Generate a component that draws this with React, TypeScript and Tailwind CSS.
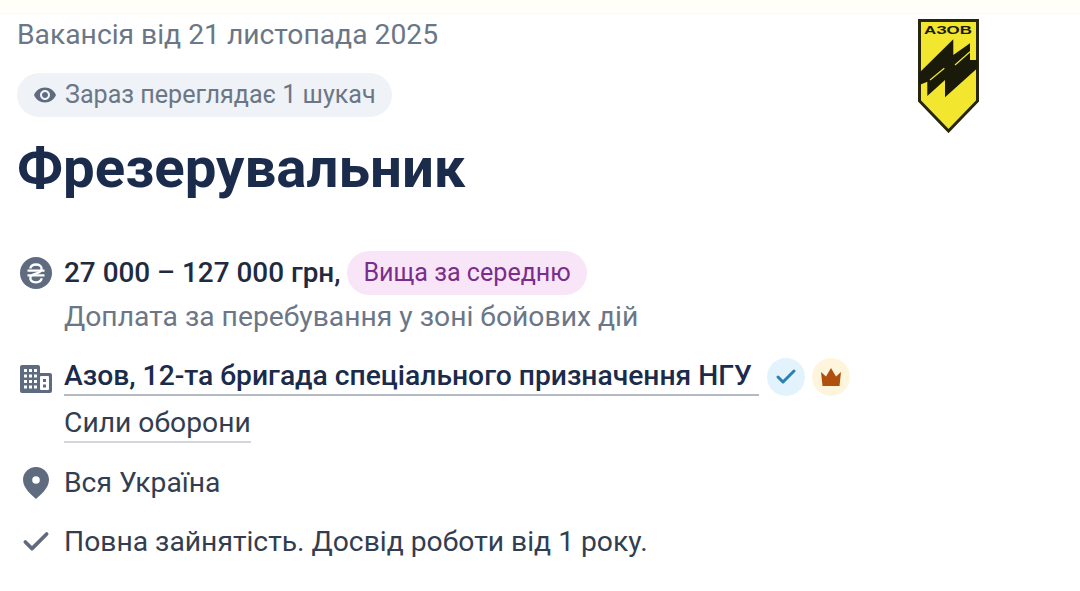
import { Check } from 'lucide-react';

function EyeIcon() {
  return (
    <svg width="24" height="24" viewBox="0 0 24 24" fill="#5f6c80">
      <path d="M12 4.500C7 4.500 2.730 7.610 1 12c1.730 4.390 6 7.500 11 7.500s9.270-3.110 11-7.500c-1.730-4.390-6-7.500-11-7.500zM12 17c-2.760 0-5-2.240-5-5s2.240-5 5-5 5 2.240 5 5-2.240 5-5 5zm0-8c-1.660 0-3 1.340-3 3s1.340 3 3 3 3-1.340 3-3-1.340-3-3-3z" />
    </svg>
  );
}

function HryvniaIcon() {
  return (
    <svg width="32" height="32" viewBox="0 0 32 32" fill="none">
      <circle cx="16" cy="16" r="16" fill="#5f6c80" />
      <path d="M10.200 11.500c.6-2.500 2.900-4 5.800-4 3.300 0 5.600 1.700 5.600 4.300 0 1.500-.8 2.600-2.200 3.500l-6.800 2.400c-1.500.8-2.300 1.800-2.300 3.300 0 2.600 2.300 4.300 5.700 4.300 2.900 0 5.200-1.500 5.800-4" stroke="#fff" strokeWidth="2.300" />
      <path d="M7.500 13.600h17M7.500 18.400h17" stroke="#fff" strokeWidth="2.200" />
    </svg>
  );
}

function BuildingIcon() {
  return (
    <svg width="32" height="28" viewBox="0 0 32 28">
      <path fill="#5f6c80" d="M2 0h16a2 2 0 0 1 2 2v6h10a2 2 0 0 1 2 2v16a2 2 0 0 1-2 2H2a2 2 0 0 1-2-2V2a2 2 0 0 1 2-2Z" />
      <g fill="#fff">
        <rect x="4" y="4" width="3" height="3" />
        <rect x="9" y="4" width="3" height="3" />
        <rect x="14" y="4" width="3" height="3" />
        <rect x="4" y="9.500" width="3" height="3" />
        <rect x="9" y="9.500" width="3" height="3" />
        <rect x="14" y="9.500" width="3" height="3" />
        <rect x="4" y="15" width="3" height="3" />
        <rect x="9" y="15" width="3" height="3" />
        <rect x="14" y="15" width="3" height="3" />
        <rect x="4" y="20.500" width="3" height="3" />
        <rect x="9" y="20.500" width="3" height="3" />
        <rect x="14" y="20.500" width="3" height="3" />
        <rect x="20" y="11" width="9" height="14" rx="1" />
      </g>
      <g fill="#5f6c80">
        <rect x="23" y="14" width="3" height="3" />
        <rect x="23" y="19.500" width="3" height="3" />
      </g>
    </svg>
  );
}

function PinIcon() {
  return (
    <svg width="26" height="32" viewBox="0 0 26 32">
      <path fillRule="evenodd" fill="#5f6c80" d="M13 0C5.800 0 0 5.700 0 12.800 0 21.500 9.500 28.800 13 32c3.500-3.200 13-10.500 13-19.200C26 5.700 20.200 0 13 0Zm0 9.200a3.800 3.800 0 1 1 0 7.600 3.800 3.800 0 0 1 0-7.600Z" />
    </svg>
  );
}

function CrownIcon() {
  return (
    <svg width="22" height="18" viewBox="0 0 22 18">
      <path fill="#b0500f" d="M1 4 6 8.500 11 0l5 8.500L21 4l-1.500 14h-17Z" />
    </svg>
  );
}

function AzovLogo() {
  return (
    <svg width="62" height="114" viewBox="0 0 62 114">
      <path d="M1.500 1.500h58V82L30.500 112 1.500 82Z" fill="#f2e62e" stroke="#26260f" strokeWidth="3" />
      <text x="6" y="15" textLength="48" lengthAdjust="spacingAndGlyphs" fontFamily="'Liberation Sans', sans-serif" fontWeight="700" fontSize="10" fill="#1a1a0a">
        АЗОВ
      </text>
      <path fill="#1a1a0a" d="M1.300 53.700 35.300 20.300V36L52 24.300V41h7.300v8.300L27 78.300V61L9.300 77V62.700L1.300 66Z" />
      <path stroke="#f2e62e" strokeWidth="1.200" fill="none" d="M12 61 26.300 49.300M37 46 52 32.700" />
    </svg>
  );
}

export default function App() {
  return (
    <div className="h-[591px] overflow-hidden bg-white font-['Roboto',sans-serif]">
      <div className="h-[14px] bg-[#fffef8] border-b border-[#fbfaef]" />

      <div className="flex justify-between pl-[17px] pr-[100px]">
        {/* Top block */}
        <div className="flex flex-col items-start">
          <p className="mt-[5px] text-[28.250px] leading-[32px] text-[#6b7686]">Вакансія від 21 листопада 2025</p>
          <div className="mt-[22px] flex h-[44px] items-center gap-[8px] rounded-full bg-[#eff2f6] pl-[16px] pr-[16px] text-[#6b7686]">
            <EyeIcon />
            <span className="text-[25.100px] leading-[30px]">Зараз переглядає 1 шукач</span>
          </div>
          <h1 className="mt-[18px] text-[56.400px] leading-[66px] font-bold text-[#1b2b4b]">Фрезерувальник</h1>
        </div>
        <div className="mt-[5px]">
          <AzovLogo />
        </div>
      </div>

      {/* Details */}
      <div className="mt-[50px] flex flex-col pl-[20px]">
        <div className="flex items-start gap-[12px]">
          <div className="mt-[6px] flex w-[32px] justify-center">
            <HryvniaIcon />
          </div>
          <div className="flex flex-col">
            <div className="flex h-[44px] items-center gap-[7px]">
              <span className="text-[27.900px] leading-[32px] font-medium text-[#1f2b40]">27 000 – 127 000 грн,</span>
              <span className="rounded-full bg-[#f8e6f8] px-[16px] py-[6px] text-[25.100px] leading-[32px] text-[#7b2d8b]">Вища за середню</span>
            </div>
            <span className="mt-[1px] text-[28.250px] leading-[42px] text-[#6b7686]">Доплата за перебування у зоні бойових дій</span>
          </div>
        </div>

        <div className="mt-[20px] flex items-start gap-[12px]">
          <div className="mt-[7px] flex w-[32px] justify-center">
            <BuildingIcon />
          </div>
          <div className="flex flex-col items-start">
            <div className="flex items-center gap-[8px]">
              <span className="border-b-2 border-[#b4bac4] pr-[7px] pb-[1px] text-[28.250px] leading-[34px] font-medium text-[#1b2b4b]">Азов, 12-та бригада спеціального призначення НГУ</span>
              <span className="flex h-[38px] w-[38px] items-center justify-center rounded-full bg-[#e2f3fd]">
                <Check size={24} strokeWidth={3} className="text-[#2c7fb0]" />
              </span>
              <span className="-ml-[1px] flex h-[38px] w-[38px] items-center justify-center rounded-full bg-[#fff5dc]">
                <CrownIcon />
              </span>
            </div>
            <span className="mt-[9px] border-b-2 border-[#d3d7dd] text-[28.250px] leading-[36px] text-[#323e50]">Сили оборони</span>
          </div>
        </div>

        <div className="mt-[20px] flex items-center gap-[12px]">
          <div className="flex w-[32px] justify-center">
            <PinIcon />
          </div>
          <span className="text-[28.250px] leading-[40px] text-[#323e50]">Вся Україна</span>
        </div>

        <div className="mt-[19px] flex items-center gap-[12px]">
          <div className="flex w-[32px] justify-center">
            <Check size={32} strokeWidth={2.750} className="text-[#5f6c80]" />
          </div>
          <span className="text-[28.250px] leading-[40px] text-[#323e50]">Повна зайнятість. Досвід роботи від 1 року.</span>
        </div>
      </div>
    </div>
  );
}
